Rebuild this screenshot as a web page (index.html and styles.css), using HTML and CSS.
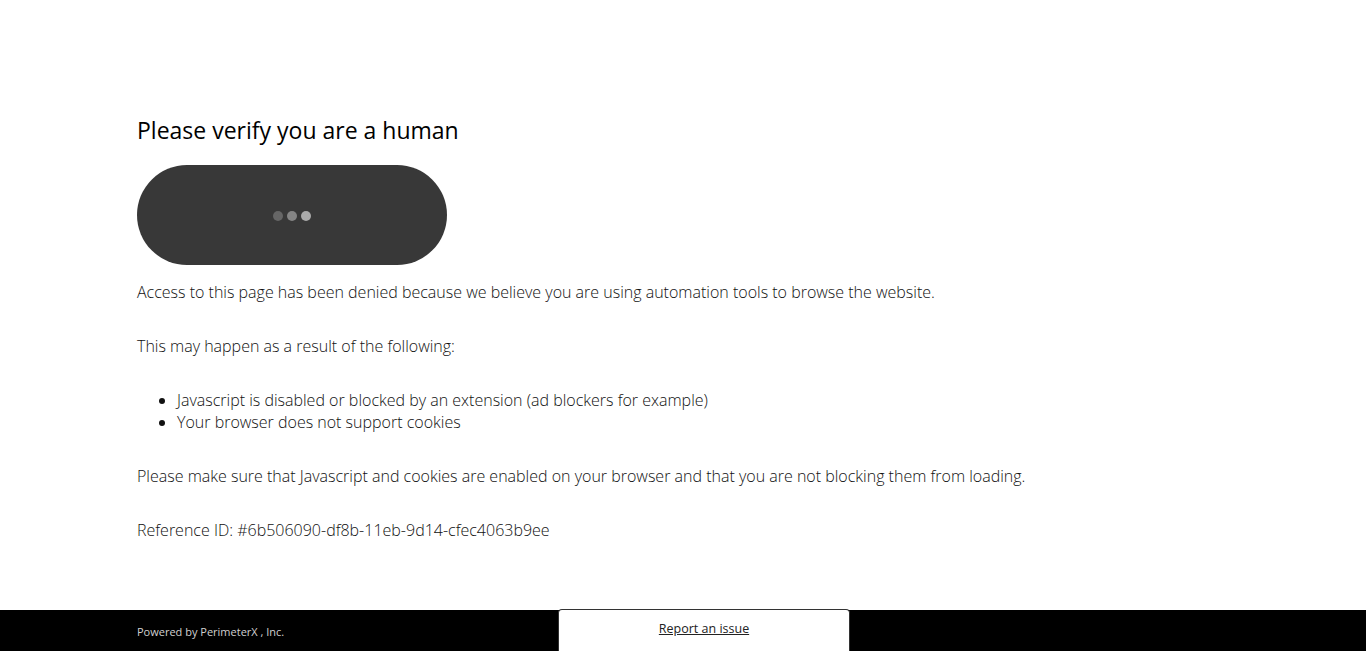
FILE: index.html
```html
<!DOCTYPE html>
<html lang="en">
<head>
<meta charset="utf-8">
<title>Access to this page has been denied</title>
<link rel="stylesheet" href="styles.css">
</head>
<body>
<main class="container">
  <h1 class="title">Please verify you are a human</h1>
  <div class="captcha">
    <span class="dot dot-1"></span>
    <span class="dot dot-2"></span>
    <span class="dot dot-3"></span>
  </div>
  <p class="text">Access to this page has been denied because we believe you are using automation tools to browse the website.</p>
  <p class="text">This may happen as a result of the following:</p>
  <ul class="list">
    <li>Javascript is disabled or blocked by an extension (ad blockers for example)</li>
    <li>Your browser does not support cookies</li>
  </ul>
  <p class="text">Please make sure that Javascript and cookies are enabled on your browser and that you are not blocking them from loading.</p>
  <p class="text">Reference ID: #6b506090-df8b-11eb-9d14-cfec4063b9ee</p>
</main>
<footer class="footer">
  <div class="footer-left"><span class="powered">Powered by PerimeterX , Inc.</span></div>
  <div class="report"><a class="report-link" href="#">Report an issue</a></div>
</footer>
</body>
</html>
```
FILE: styles.css
```css
html, body {
  margin: 0;
  padding: 0;
  height: 100%;
}
body {
  font-family: "Open Sans", "DejaVu Sans", sans-serif;
  color: #000;
  background: #fff;
  display: flex;
  flex-direction: column;
}
.container {
  flex: 1;
  padding: 114px 0 0 137px;
}
.title {
  font-size: 23px;
  font-weight: 400;
  line-height: 33px;
  margin: 0 0 18px;
  color: #000;
}
.captcha {
  width: 310px;
  height: 100px;
  border-radius: 50px;
  background: #383838;
  display: flex;
  align-items: center;
  justify-content: center;
  gap: 4px;
  margin-bottom: 16px;
  padding-top: 2px;
  box-sizing: border-box;
}
.dot {
  width: 10px;
  height: 10px;
  border-radius: 50%;
}
.dot-1 { background: #666; }
.dot-2 { background: #858585; }
.dot-3 { background: #aaa; }
.text {
  font-size: 16px;
  font-weight: 300;
  line-height: 22px;
  margin: 0 0 32px;
  color: #111;
}
.list {
  font-size: 16px;
  font-weight: 300;
  line-height: 22px;
  margin: 0 0 32px;
  padding-left: 40px;
  color: #111;
}
.footer {
  height: 41px;
  background: #000;
  display: flex;
  align-items: stretch;
  flex-shrink: 0;
}
.footer-left {
  width: 421px;
  padding-left: 137px;
  font-size: 11px;
  font-weight: 400;
  color: #d0d0d0;
  display: flex;
  align-items: center;
  padding-top: 2px;
}
.report {
  width: 290px;
  margin-top: -1px;
  background: #fff;
  border: 1px solid #333;
  border-bottom: 0;
  border-radius: 4px 4px 0 0;
  display: flex;
  align-items: center;
  justify-content: center;
  padding-bottom: 4px;
}
.report-link {
  font-size: 12.5px;
  color: #222;
  text-decoration: underline;
}
```
